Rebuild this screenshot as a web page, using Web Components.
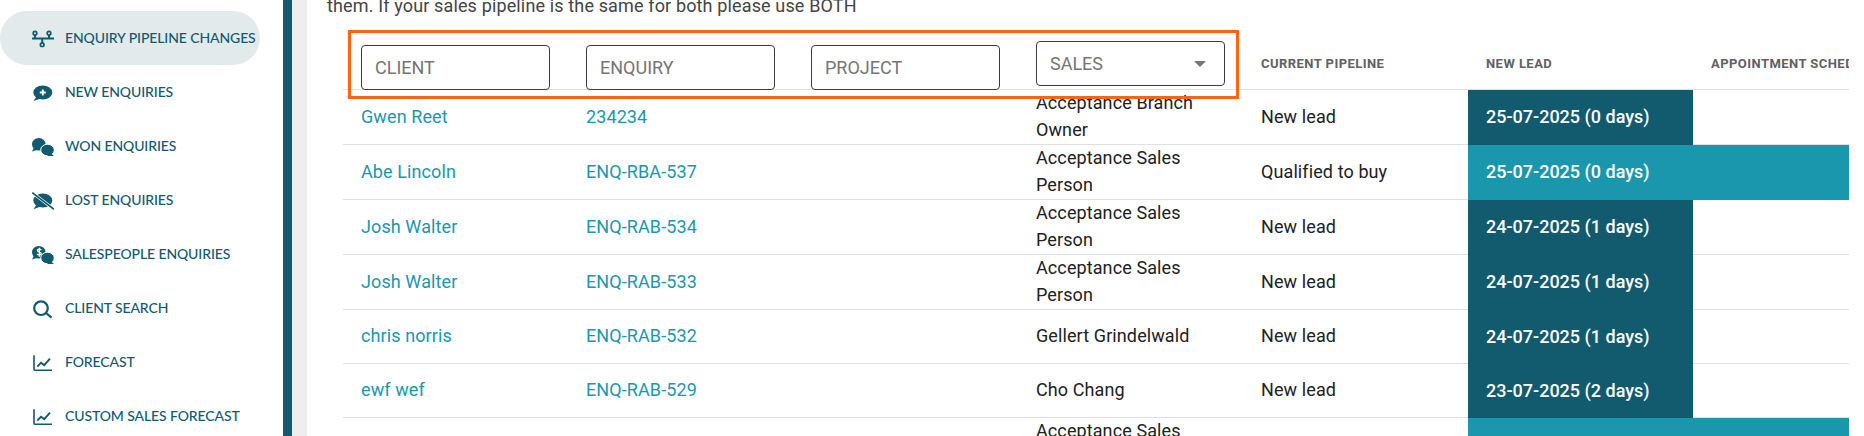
<!DOCTYPE html>
<html>
<head>
<meta charset="utf-8">
<title>Enquiry pipeline changes</title>
<style>
  html, body { margin: 0; height: 436px; overflow: hidden; background: #fff; }
  body { display: flex; font-family: Roboto, "Liberation Sans", sans-serif; }
</style>
</head>
<body>
  <side-nav>
    <nav-item icon="pipeline" active>ENQUIRY PIPELINE CHANGES</nav-item>
    <nav-item icon="comment-plus">NEW ENQUIRIES</nav-item>
    <nav-item icon="comments">WON ENQUIRIES</nav-item>
    <nav-item icon="comment-slash">LOST ENQUIRIES</nav-item>
    <nav-item icon="comments-dollar">SALESPEOPLE ENQUIRIES</nav-item>
    <nav-item icon="search">CLIENT SEARCH</nav-item>
    <nav-item icon="chart">FORECAST</nav-item>
    <nav-item icon="chart">CUSTOM SALES FORECAST</nav-item>
  </side-nav>
  <pipeline-page>
    <span slot="intro">them. If your sales pipeline is the same for both please use BOTH</span>
    <pipeline-table>
      <pipeline-row header>
        <filter-field>CLIENT</filter-field>
        <filter-field>ENQUIRY</filter-field>
        <filter-field>PROJECT</filter-field>
        <filter-field select>SALES</filter-field>
        <pipeline-cell head>CURRENT PIPELINE</pipeline-cell>
        <pipeline-cell head>NEW LEAD</pipeline-cell>
        <pipeline-cell head>APPOINTMENT SCHEDULED</pipeline-cell>
      </pipeline-row>
      <pipeline-row>
        <pipeline-cell link>Gwen Reet</pipeline-cell>
        <pipeline-cell link>234234</pipeline-cell>
        <pipeline-cell></pipeline-cell>
        <pipeline-cell>Acceptance Branch Owner</pipeline-cell>
        <pipeline-cell>New lead</pipeline-cell>
        <pipeline-cell stage="dark">25-07-2025 (0 days)</pipeline-cell>
        <pipeline-cell></pipeline-cell>
      </pipeline-row>
      <pipeline-row>
        <pipeline-cell link>Abe Lincoln</pipeline-cell>
        <pipeline-cell link>ENQ-RBA-537</pipeline-cell>
        <pipeline-cell></pipeline-cell>
        <pipeline-cell>Acceptance Sales Person</pipeline-cell>
        <pipeline-cell>Qualified to buy</pipeline-cell>
        <pipeline-cell stage="teal" wide>25-07-2025 (0 days)</pipeline-cell>
      </pipeline-row>
      <pipeline-row>
        <pipeline-cell link>Josh Walter</pipeline-cell>
        <pipeline-cell link>ENQ-RAB-534</pipeline-cell>
        <pipeline-cell></pipeline-cell>
        <pipeline-cell>Acceptance Sales Person</pipeline-cell>
        <pipeline-cell>New lead</pipeline-cell>
        <pipeline-cell stage="dark">24-07-2025 (1 days)</pipeline-cell>
        <pipeline-cell></pipeline-cell>
      </pipeline-row>
      <pipeline-row>
        <pipeline-cell link>Josh Walter</pipeline-cell>
        <pipeline-cell link>ENQ-RAB-533</pipeline-cell>
        <pipeline-cell></pipeline-cell>
        <pipeline-cell>Acceptance Sales Person</pipeline-cell>
        <pipeline-cell>New lead</pipeline-cell>
        <pipeline-cell stage="dark">24-07-2025 (1 days)</pipeline-cell>
        <pipeline-cell></pipeline-cell>
      </pipeline-row>
      <pipeline-row>
        <pipeline-cell link>chris norris</pipeline-cell>
        <pipeline-cell link>ENQ-RAB-532</pipeline-cell>
        <pipeline-cell></pipeline-cell>
        <pipeline-cell>Gellert Grindelwald</pipeline-cell>
        <pipeline-cell>New lead</pipeline-cell>
        <pipeline-cell stage="dark">24-07-2025 (1 days)</pipeline-cell>
        <pipeline-cell></pipeline-cell>
      </pipeline-row>
      <pipeline-row>
        <pipeline-cell link>ewf wef</pipeline-cell>
        <pipeline-cell link>ENQ-RAB-529</pipeline-cell>
        <pipeline-cell></pipeline-cell>
        <pipeline-cell>Cho Chang</pipeline-cell>
        <pipeline-cell>New lead</pipeline-cell>
        <pipeline-cell stage="dark">23-07-2025 (2 days)</pipeline-cell>
        <pipeline-cell></pipeline-cell>
      </pipeline-row>
      <pipeline-row>
        <pipeline-cell link></pipeline-cell>
        <pipeline-cell link></pipeline-cell>
        <pipeline-cell></pipeline-cell>
        <pipeline-cell>Acceptance Sales Person</pipeline-cell>
        <pipeline-cell></pipeline-cell>
        <pipeline-cell stage="teal" wide></pipeline-cell>
      </pipeline-row>
    </pipeline-table>
  </pipeline-page>

<script>
const BUBBLES = `<g fill="currentColor">
      <ellipse cx="6.8" cy="9.2" rx="6.8" ry="6.3"/><path d="M2 12.5L0 16.600l5.500-1.800z"/>
      <ellipse cx="15.500" cy="15" rx="6.800" ry="5.800" stroke="#fff"/><path d="M18.500 18l3.500 3-7 .1z"/></g>`;

const ICONS = {
  pipeline: `<g fill="none" stroke="currentColor" stroke-width="1.700">
      <circle cx="3" cy="6.200" r="1.800"/><circle cx="17" cy="6.200" r="1.800"/><circle cx="10.200" cy="17.700" r="1.800"/>
      <path stroke-width="2" d="M0 11.500h22M3 8v3.500M17 8v3.500M10.200 11.500V16"/></g>`,
  "comment-plus": `<g fill="currentColor"><ellipse cx="10.800" cy="11.500" rx="9.500" ry="7"/><path d="M4.500 15.500L1.500 20l6.500-2.200z"/></g>
      <path fill="none" stroke="#fff" stroke-width="1.800" d="M10.800 8.500v6M7.800 11.500h6"/>`,
  comments: BUBBLES,
  "comment-slash": `<g fill="currentColor"><ellipse cx="10.800" cy="11.500" rx="9.500" ry="7"/><path d="M4.500 15.500L1.500 20.300l6.500-2.500z"/></g>
      <path fill="none" stroke="#fff" stroke-width="3" d="M.3 3.700L22 20.300"/>
      <path fill="none" stroke="currentColor" stroke-width="1.600" d="M.3 3.700L22 20.300"/>`,
  "comments-dollar": BUBBLES + `
      <path fill="none" stroke="#fff" stroke-width="1.300" d="M9.300 7.200c-.4-.7-1.200-1-2-1-1.100 0-1.900.6-1.900 1.400 0 1.900 3.900 1 3.900 3 0 .9-.9 1.400-2 1.400-.9 0-1.700-.3-2.100-1M7.300 4.700v9"/>`,
  search: `<g fill="none" stroke="currentColor" stroke-width="2.200"><circle cx="9" cy="11.200" r="6.800"/><path d="M14 16l5.600 4.600"/></g>`,
  chart: `<g fill="none" stroke="currentColor"><path stroke-width="1.600" d="M2 4.300v14a1 1 0 0 0 1 1h17"/><path stroke-width="1.900" d="M5.300 15.700l3.700-4 3.200 2.400 5.800-6.400"/></g>`,
};

const navItemTemplate = document.createElement("template");
navItemTemplate.innerHTML = `
  <style>
    :host {
      display: flex;
      align-items: center;
      box-sizing: border-box;
      height: 54px;
      width: 260px;
      padding-left: 32px;
      border-radius: 27px;
      color: #125a6e;
      font: 500 14px/18px Lato, "Open Sans", sans-serif;
      letter-spacing: -.11px;
      white-space: nowrap;
    }
    :host([active]) { background: #e2eaec; }
    svg { width: 22px; height: 22px; margin-right: 11px; flex: none; }
  </style>
  <svg viewBox="0 0 22 22"></svg>
  <slot></slot>`;

class NavItem extends HTMLElement {
  constructor() {
    super();
    this.attachShadow({ mode: "open" });
    this.shadowRoot.appendChild(navItemTemplate.content.cloneNode(true));
  }
  connectedCallback() {
    this.shadowRoot.querySelector("svg").innerHTML = ICONS[this.getAttribute("icon")] || "";
  }
}
customElements.define("nav-item", NavItem);

class SideNav extends HTMLElement {
  constructor() {
    super();
    this.attachShadow({ mode: "open" }).innerHTML = `
      <style>
        :host {
          display: block;
          box-sizing: border-box;
          flex: none;
          width: 292px;
          height: 436px;
          padding-top: 11px;
          border-right: 9px solid #125a6e;
        }
      </style>
      <slot></slot>`;
  }
}
customElements.define("side-nav", SideNav);

class PipelinePage extends HTMLElement {
  constructor() {
    super();
    this.attachShadow({ mode: "open" }).innerHTML = `
      <style>
        :host {
          display: block;
          position: relative;
          flex: 1;
          min-width: 0;
          padding-left: 20px;
          border-left: 15px solid #eeeeee;
          color: #444;
          font-size: 18px;
          letter-spacing: .14px;
        }
        .intro { margin-top: -8px; height: 27px; line-height: 27px; white-space: nowrap; }
        .callout {
          position: absolute;
          left: 41px;
          top: 30px;
          width: 885px;
          height: 63px;
          border: 3px solid #ff6414;
          pointer-events: none;
        }
      </style>
      <div class="intro"><slot name="intro"></slot></div>
      <slot></slot>
      <div class="callout"></div>`;
  }
}
customElements.define("pipeline-page", PipelinePage);

class PipelineTable extends HTMLElement {
  constructor() {
    super();
    this.attachShadow({ mode: "open" }).innerHTML = `
      <style>
        :host {
          display: block;
          width: 1506px;
          margin-left: 16px;
          overflow: hidden;
          color: #212121;
          letter-spacing: .1px;
        }
      </style>
      <slot></slot>`;
  }
}
customElements.define("pipeline-table", PipelineTable);

class PipelineRow extends HTMLElement {
  constructor() {
    super();
    this.attachShadow({ mode: "open" }).innerHTML = `
      <style>
        :host {
          display: grid;
          grid-template-columns: repeat(6, 225px) 300px;
        }
        :host([header]) { height: 71px; }
      </style>
      <slot></slot>`;
  }
}
customElements.define("pipeline-row", PipelineRow);

class PipelineCell extends HTMLElement {
  constructor() {
    super();
    this.attachShadow({ mode: "open" }).innerHTML = `
      <style>
        :host {
          display: flex;
          align-items: center;
          box-sizing: border-box;
          min-height: 54px;
          padding: 0 18px;
          border-bottom: 1px solid #e0e0e0;
          line-height: 27px;
        }
        span { margin: -1px 0 1px; }
        :host([link]) { color: #1b97ad; }
        :host([head]) {
          min-height: 0;
          padding-top: 20px;
          color: #616161;
          font-size: 13px;
          font-weight: 700;
          letter-spacing: .45px;
          white-space: nowrap;
        }
        :host([stage]) { color: #fff; font-weight: 500; letter-spacing: 0; border-bottom: 0; white-space: nowrap; }
        :host([stage="dark"]) { background: #125a6e; }
        :host([stage="teal"]) { background: #1b97ad; }
        :host([wide]) { grid-column: span 2; }
      </style>
      <span><slot></slot></span>`;
  }
}
customElements.define("pipeline-cell", PipelineCell);

class FilterField extends HTMLElement {
  constructor() {
    super();
    this.attachShadow({ mode: "open" }).innerHTML = `
      <style>
        :host {
          display: flex;
          flex-direction: column;
          justify-content: flex-end;
          padding: 0 0 0 18px;
          border-bottom: 1px solid #e0e0e0;
        }
        .box {
          display: flex;
          align-items: center;
          justify-content: space-between;
          box-sizing: border-box;
          width: 189px;
          height: 45px;
          margin-bottom: -1px;
          padding: 0 18px 0 13px;
          border: 1px solid #3c3c3c;
          border-radius: 4px;
          background: #fff;
          color: #757575;
          letter-spacing: 0;
        }
        :host([select]) .box { margin-bottom: 3px; }
        .arrow { display: none; width: 0; height: 0; border: 6px solid transparent; border-top: 6px solid #757575; border-bottom: 0; }
        :host([select]) .arrow { display: block; }
      </style>
      <div class="box"><span><slot></slot></span><i class="arrow"></i></div>`;
  }
}
customElements.define("filter-field", FilterField);
</script>
</body>
</html>
